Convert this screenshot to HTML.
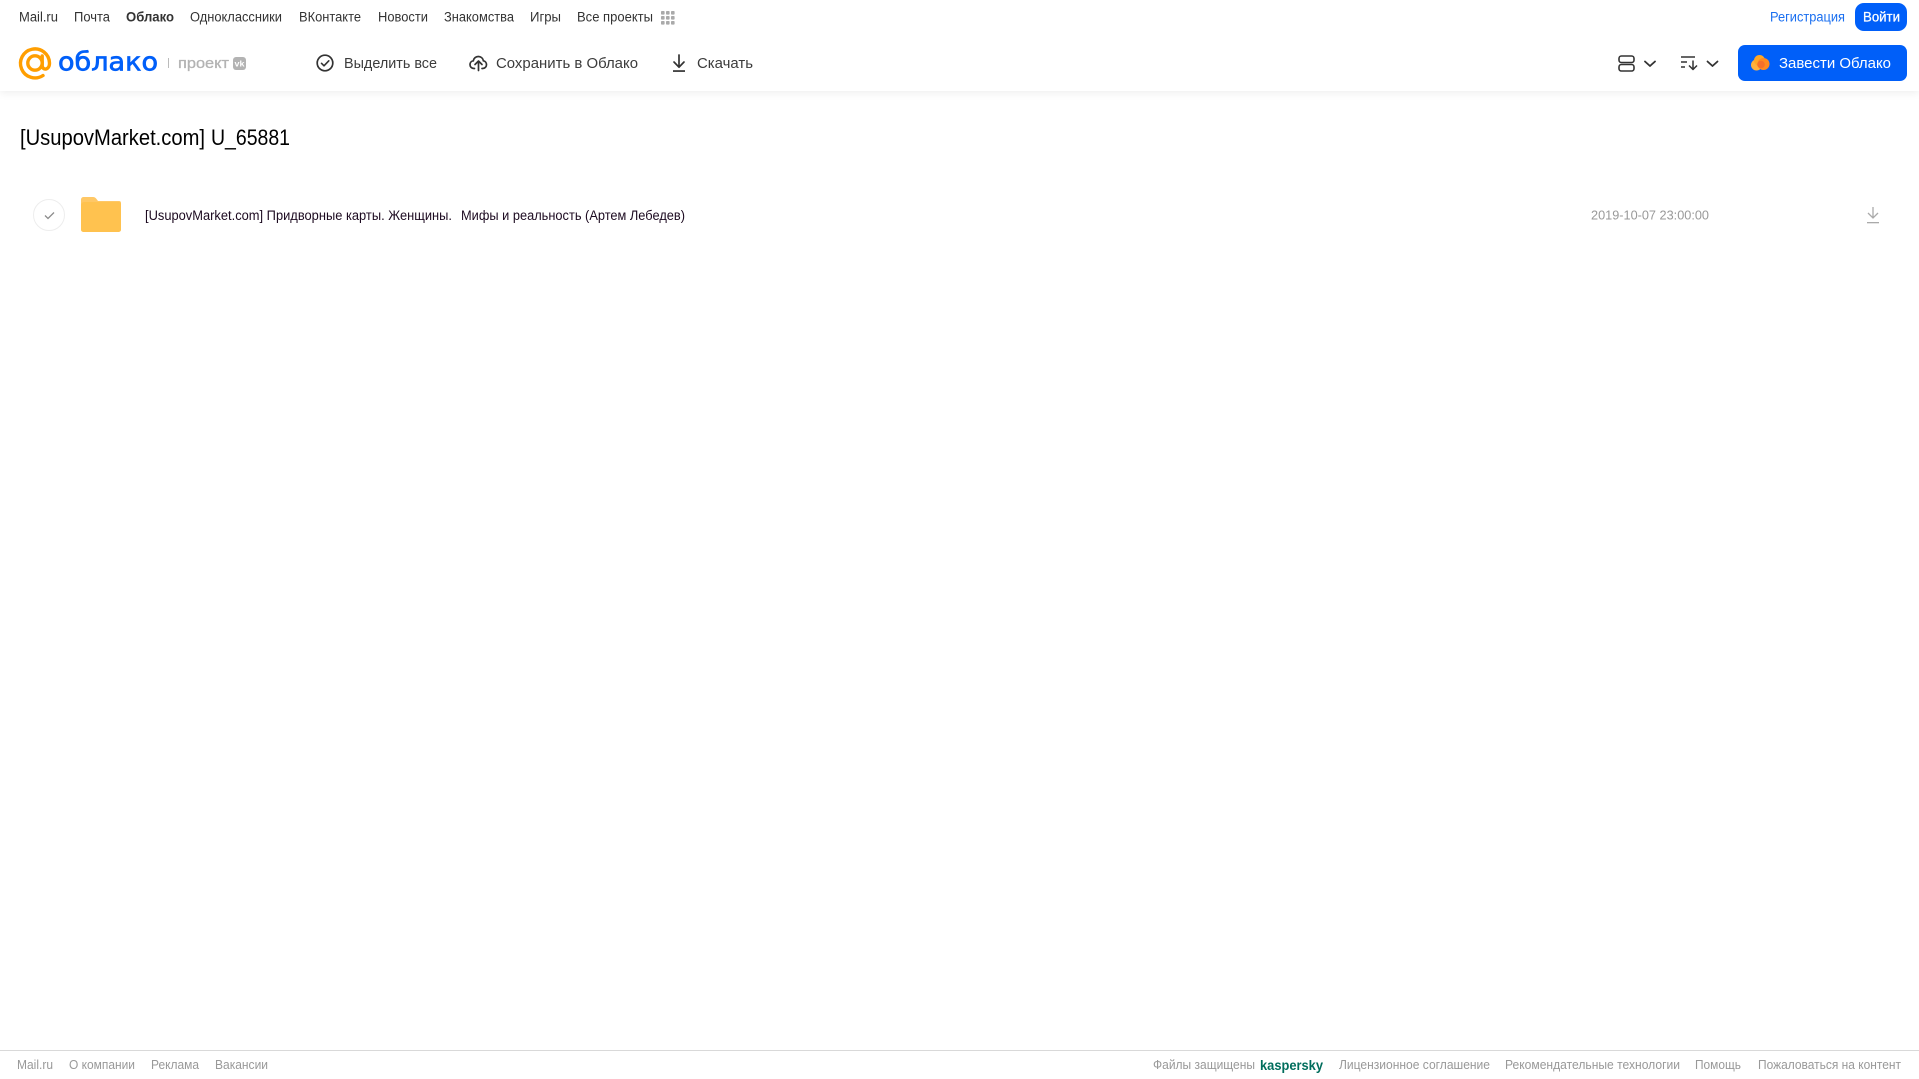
<!DOCTYPE html>
<html lang="ru"><head><meta charset="utf-8"><title>Облако</title>
<style>
html,body{margin:0;padding:0;background:#fff;width:1919px;height:1079px;overflow:hidden}
svg{position:absolute;left:0;top:0;display:block}
text{font-family:"Liberation Sans",sans-serif;white-space:pre}
.n{font-size:13.5px;fill:#333}
.t{font-size:14.5px;fill:#3c3c3c}
.f{font-size:12.5px;fill:#999}
</style></head><body>
<div style="position:absolute;left:0;top:0;width:1919px;height:91px;background:#fff;box-shadow:0 2px 8px rgba(0,0,0,.07)"></div>
<div style="position:absolute;left:0;top:1050px;width:1919px;height:1px;background:#d9d9d9"></div>
<svg width="1919" height="1079" viewBox="0 0 1919 1079" xmlns="http://www.w3.org/2000/svg">
<!-- top nav -->
<g class="nav">
<text class="n" x="19" y="21.500" textLength="39" lengthAdjust="spacingAndGlyphs">Mail.ru</text>
<text class="n" x="74" y="21.500" textLength="36" lengthAdjust="spacingAndGlyphs">Почта</text>
<text class="n" x="126" y="21.500" textLength="48" lengthAdjust="spacingAndGlyphs" font-weight="bold">Облако</text>
<text class="n" x="190" y="21.500" textLength="92" lengthAdjust="spacingAndGlyphs">Одноклассники</text>
<text class="n" x="299" y="21.500" textLength="62" lengthAdjust="spacingAndGlyphs">ВКонтакте</text>
<text class="n" x="378" y="21.500" textLength="50" lengthAdjust="spacingAndGlyphs">Новости</text>
<text class="n" x="444" y="21.500" textLength="70" lengthAdjust="spacingAndGlyphs">Знакомства</text>
<text class="n" x="530" y="21.500" textLength="31" lengthAdjust="spacingAndGlyphs">Игры</text>
<text class="n" x="577" y="21.500" textLength="76" lengthAdjust="spacingAndGlyphs">Все проекты</text>
</g>
<g fill="#aaa">
<rect x="661" y="11" width="3.600" height="3.600" rx=".8"/><rect x="666" y="11" width="3.600" height="3.600" rx=".8"/><rect x="671" y="11" width="3.600" height="3.600" rx=".8"/>
<rect x="661" y="16" width="3.600" height="3.600" rx=".8"/><rect x="666" y="16" width="3.600" height="3.600" rx=".8"/><rect x="671" y="16" width="3.600" height="3.600" rx=".8"/>
<rect x="661" y="21" width="3.600" height="3.600" rx=".8"/><rect x="666" y="21" width="3.600" height="3.600" rx=".8"/><rect x="671" y="21" width="3.600" height="3.600" rx=".8"/>
</g>
<text x="1770" y="21.500" font-size="13.500" fill="#1a6ff0" textLength="75" lengthAdjust="spacingAndGlyphs">Регистрация</text>
<rect x="1855" y="3" width="52" height="28" rx="9" fill="#005ff9"/>
<text x="1863" y="21.500" font-size="13.500" fill="#fff" stroke="#fff" stroke-width=".25" textLength="37" lengthAdjust="spacingAndGlyphs">Войти</text>

<!-- logo -->
<circle cx="35" cy="63" r="7.200" fill="none" stroke="#ff9e00" stroke-width="3.400"/>
<path d="M42.200 56v9.500c0 5 7.300 5.200 7.300-2.500A14.500 14.500 0 1 0 43 75.500" fill="none" stroke="#ff9e00" stroke-width="3.400" stroke-linecap="round"/>
<text x="58" y="70.500" font-size="26" fill="#005ff9" stroke="#005ff9" stroke-width=".7" style="font-family:'DejaVu Sans',sans-serif" textLength="100" lengthAdjust="spacingAndGlyphs">облако</text>
<rect x="168" y="58" width="1" height="10" fill="#bbb"/>
<text x="178" y="68" font-size="14.500" fill="#b3b3b3" stroke="#b3b3b3" stroke-width=".3" textLength="51" lengthAdjust="spacingAndGlyphs">проект</text>
<rect x="233" y="57" width="13" height="13" rx="3" fill="#b3b3b3"/>
<text x="234.500" y="66.500" font-size="8.500" font-weight="bold" fill="#fff" textLength="10" lengthAdjust="spacingAndGlyphs">vk</text>

<!-- toolbar -->
<circle cx="325" cy="63" r="7.800" fill="none" stroke="#333" stroke-width="1.700"/>
<path d="M321.500 63.300l2.500 2.500 4.800-5" fill="none" stroke="#333" stroke-width="1.600" stroke-linecap="round" stroke-linejoin="round"/>
<text class="t" x="344" y="68" textLength="93" lengthAdjust="spacingAndGlyphs">Выделить все</text>
<path d="M474.500 68.500h-.5c-2.400 0-4-1.700-4-3.900 0-2 1.400-3.600 3.300-3.800.4-2.600 2.500-4.300 5-4.300s4.600 1.700 5.100 4.300c1.800.3 3.100 1.900 3.100 3.800 0 2.200-1.600 3.900-4 3.900h-.5" fill="none" stroke="#333" stroke-width="1.700" stroke-linecap="round"/>
<path d="M478.500 70.500v-9M475 64.500l3.500-3.500 3.500 3.500" fill="none" stroke="#333" stroke-width="1.700" stroke-linecap="round" stroke-linejoin="round"/>
<text class="t" x="496" y="68" textLength="142" lengthAdjust="spacingAndGlyphs">Сохранить в Облако</text>
<path d="M679 55v12M674 62l5 5.200 5-5.200" fill="none" stroke="#333" stroke-width="1.700" stroke-linecap="round" stroke-linejoin="round"/>
<rect x="673" y="70.200" width="12" height="1.700" fill="#333"/>
<text class="t" x="697" y="68" textLength="56" lengthAdjust="spacingAndGlyphs">Скачать</text>

<!-- right tools -->
<rect x="1619" y="56" width="15" height="6.500" rx="2.400" fill="none" stroke="#333" stroke-width="1.600"/>
<rect x="1619" y="64.500" width="15" height="6.500" rx="2.400" fill="none" stroke="#333" stroke-width="1.600"/>
<path d="M1645 61.500l5 4.500 5-4.500" fill="none" stroke="#333" stroke-width="1.800" stroke-linecap="round" stroke-linejoin="round"/>
<path d="M1681 57h14M1681 62h6M1681 67h4" fill="none" stroke="#333" stroke-width="1.400"/>
<path d="M1693 60.500v9M1689 65.500l4 4 4-4" fill="none" stroke="#333" stroke-width="1.500" stroke-linejoin="round"/>
<path d="M1707.500 61.500l5 4.500 5-4.500" fill="none" stroke="#333" stroke-width="1.800" stroke-linecap="round" stroke-linejoin="round"/>
<rect x="1738" y="45" width="169" height="36" rx="7" fill="#005ff9"/>
<circle cx="1756.500" cy="65" r="5.500" fill="#ffb13d"/><circle cx="1759.500" cy="60.500" r="5.500" fill="#ffa726"/><circle cx="1763.500" cy="64" r="6" fill="#ff8a1f"/>
<circle cx="1761" cy="64.500" r="3.800" fill="#f5702a"/>
<text x="1779" y="68" font-size="14.500" fill="#fff" textLength="112" lengthAdjust="spacingAndGlyphs">Завести Облако</text>

<!-- title -->
<text x="20" y="145" font-size="22" fill="#000" textLength="185" lengthAdjust="spacingAndGlyphs">[UsupovMarket.com]</text>
<text x="211" y="145" font-size="22" fill="#000" textLength="79" lengthAdjust="spacingAndGlyphs">U_65881</text>

<!-- row -->
<circle cx="49" cy="215" r="15.500" fill="#fff" stroke="#ededed" stroke-width="1"/>
<path d="M45 215.500l3 3 6-6" fill="none" stroke="#8c8c8c" stroke-width="1.300"/>
<path d="M81 199.500a2.500 2.500 0 0 1 2.500-2.500h9.500c1.500 0 2.500.8 3.500 2l1.500 2h21a2 2 0 0 1 2 2v26.500a2.500 2.500 0 0 1-2.500 2.500h-35a2.500 2.500 0 0 1-2.500-2.500z" fill="#ffc866"/>
<path d="M81 205a3 3 0 0 1 3-3h34.500a2.500 2.500 0 0 1 2.500 2.500v25a2.500 2.500 0 0 1-2.500 2.500h-35a2.500 2.500 0 0 1-2.500-2.500z" fill="#ffc24f"/>
<text x="145" y="220" font-size="13.500" fill="#1c0a20" textLength="307" lengthAdjust="spacingAndGlyphs">[UsupovMarket.com] Придворные карты. Женщины.</text>
<text x="461" y="220" font-size="13.500" fill="#1c0a20" textLength="224" lengthAdjust="spacingAndGlyphs">Мифы и реальность (Артем Лебедев)</text>
<text x="1591" y="219.500" font-size="13" fill="#999" textLength="118" lengthAdjust="spacingAndGlyphs">2019-10-07 23:00:00</text>
<path d="M1873 207v11M1868 213l5 5 5-5" fill="none" stroke="#aaa" stroke-width="1.300"/>
<rect x="1867" y="222" width="12" height="1.300" fill="#aaa"/>

<!-- footer -->
<text class="f" x="17" y="1069" textLength="36" lengthAdjust="spacingAndGlyphs">Mail.ru</text>
<text class="f" x="69" y="1069" textLength="66" lengthAdjust="spacingAndGlyphs">О компании</text>
<text class="f" x="151" y="1069" textLength="48" lengthAdjust="spacingAndGlyphs">Реклама</text>
<text class="f" x="215" y="1069" textLength="53" lengthAdjust="spacingAndGlyphs">Вакансии</text>
<text class="f" x="1153" y="1069" textLength="102" lengthAdjust="spacingAndGlyphs">Файлы защищены</text>
<text x="1260" y="1070" font-size="13.500" font-weight="bold" fill="#006d5c" textLength="63" lengthAdjust="spacingAndGlyphs">kaspersky</text>
<text class="f" x="1339" y="1069" textLength="151" lengthAdjust="spacingAndGlyphs">Лицензионное соглашение</text>
<text class="f" x="1505" y="1069" textLength="175" lengthAdjust="spacingAndGlyphs">Рекомендательные технологии</text>
<text class="f" x="1695" y="1069" textLength="46" lengthAdjust="spacingAndGlyphs">Помощь</text>
<text class="f" x="1758" y="1069" textLength="143" lengthAdjust="spacingAndGlyphs">Пожаловаться на контент</text>
</svg>
</body></html>
